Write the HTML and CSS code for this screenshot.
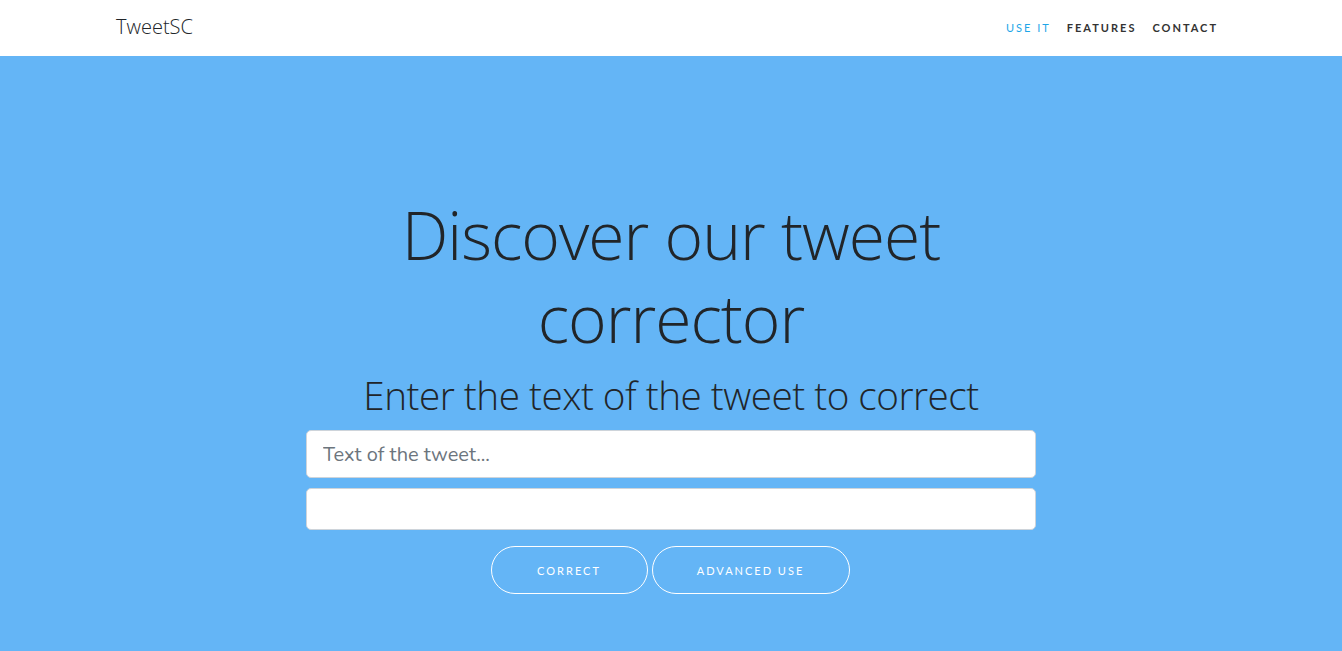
FILE: index.html
```html
<!DOCTYPE html>
<html>
<head>
<meta charset="utf-8">
<link rel="stylesheet" href="styles.css">
</head>
<body>
<nav class="navbar">
  <div class="container nav-inner">
    <a class="brand" href="#">TweetSC</a>
    <ul class="nav-links">
      <li><a class="active" href="#">Use it</a></li>
      <li><a href="#">Features</a></li>
      <li><a href="#">Contact</a></li>
    </ul>
  </div>
</nav>
<header class="hero">
  <div class="hero-content">
    <h1 class="title">Discover our tweet corrector</h1>
    <h2 class="subtitle">Enter the text of the tweet to correct</h2>
    <form class="form">
      <input class="field field-main" type="text" placeholder="Text of the tweet...">
      <input class="field field-second" type="text">
      <div class="buttons">
        <button type="button" class="btn btn-correct">Correct</button>
        <button type="button" class="btn btn-adv">Advanced use</button>
      </div>
    </form>
  </div>
</header>
</body>
</html>
```
FILE: styles.css
```css
* { box-sizing: border-box; }
html, body { margin: 0; padding: 0; }
body {
  font-family: "Lato", "Liberation Sans", sans-serif;
  color: #212529;
  background: #64b5f6;
  height: 651px;
  overflow: hidden;
}
.navbar {
  background: #fff;
  height: 56px;
}
.container {
  width: 1140px;
  margin: 0 auto;
  padding: 0 15px;
}
.nav-inner {
  display: flex;
  align-items: center;
  justify-content: space-between;
  height: 56px;
}
.brand {
  font-family: "Open Sans", "Liberation Sans", sans-serif;
  font-weight: 300;
  font-size: 20px;
  color: #212529;
  text-decoration: none;
  margin-top: -4px;
}
.nav-links {
  list-style: none;
  display: flex;
  margin: 0 8px 0 0;
  padding: 0;
}
.nav-links a {
  display: block;
  padding: 0 8px;
  font-family: "Lato", sans-serif;
  font-size: 11px;
  font-weight: 700;
  letter-spacing: 2px;
  text-transform: uppercase;
  color: #333;
  text-decoration: none;
  margin-top: -2px;
}
.nav-links li:last-child a { padding-right: 0; }
.nav-links a.active { color: #1ea6e8; font-weight: 400; }
.hero {
  height: 595px;
  background: #64b5f6;
  display: flex;
  justify-content: center;
}
.hero-content {
  width: 730px;
  padding-top: 137px;
  text-align: center;
}
.title {
  font-family: "Open Sans", "Liberation Sans", sans-serif;
  font-weight: 300;
  font-size: 66px;
  line-height: 83px;
  margin: 0 auto;
  width: 600px;
  letter-spacing: -1px;
}
.subtitle {
  font-family: "Open Sans", "Liberation Sans", sans-serif;
  font-weight: 300;
  font-size: 38.7px;
  line-height: 52px;
  margin: 10px 0 9px;
  letter-spacing: -0.5px;
}
.form {
  display: flex;
  flex-direction: column;
  gap: 10px;
}
.field {
  width: 100%;
  background: #fff;
  border: 1px solid #ced4da;
  border-radius: 5px;
  font-family: "Nunito", "Lato", sans-serif;
  font-size: 20px;
  color: #495057;
  padding: 0 16px;
}
.field::placeholder { color: #6c757d; }
.field-main { height: 48px; }
.field-second { height: 42px; }
.buttons {
  display: flex;
  justify-content: center;
  gap: 4px;
  margin-top: 6px;
  padding-right: 2px;
}
.btn {
  height: 48px;
  background: transparent;
  border: 1px solid #fff;
  border-radius: 300px;
  color: #fff;
  font-family: "Lato", sans-serif;
  font-size: 11px;
  letter-spacing: 2px;
  text-transform: uppercase;
}
.btn-correct { width: 157px; }
.btn-adv { width: 198px; }
```
